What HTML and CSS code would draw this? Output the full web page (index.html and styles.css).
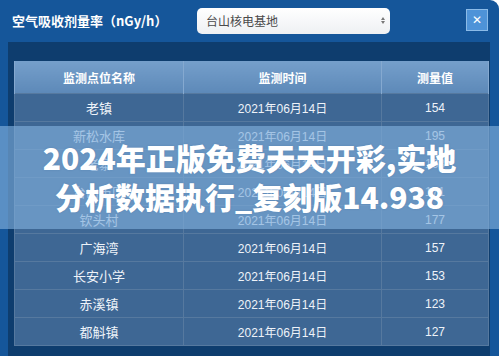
FILE: index.html
```html
<!DOCTYPE html>
<html lang="zh">
<head>
<meta charset="utf-8">
<link rel="stylesheet" href="styles.css">
</head>
<body>
<div class="panel">
  <div class="head">
    <div class="title">空气吸收剂量率（nGy/h）</div>
    <div class="select">
      <span>台山核电基地</span>
      <span class="arrows"><i class="up"></i><i class="down"></i></span>
    </div>
    <div class="close">✕</div>
  </div>
  <div class="body">
    <table class="grid">
      <thead>
        <tr><th class="c1">监测点位名称</th><th class="c2">监测时间</th><th class="c3">测量值</th></tr>
      </thead>
      <tbody>
        <tr><td>老镇</td><td>2021年06月14日</td><td>154</td></tr>
        <tr><td>新松水库</td><td>2021年06月14日</td><td>195</td></tr>
        <tr><td>老寨</td><td>2021年06月14日</td><td>168</td></tr>
        <tr><td>台山市区</td><td>2021年06月14日</td><td>171</td></tr>
        <tr><td>钦头村</td><td>2021年06月14日</td><td>177</td></tr>
        <tr><td>广海湾</td><td>2021年06月14日</td><td>157</td></tr>
        <tr><td>长安小学</td><td>2021年06月14日</td><td>153</td></tr>
        <tr><td>赤溪镇</td><td>2021年06月14日</td><td>123</td></tr>
        <tr><td>都斛镇</td><td>2021年06月14日</td><td>127</td></tr>
      </tbody>
    </table>
  </div>
  <div class="banner">
    <div class="banner-text">2024年正版免费天天开彩,实地<br>分析数据执行_复刻版14.938</div>
  </div>
</div>
</body>
</html>
```

FILE: styles.css
```css
html, body {
  margin: 0;
  padding: 0;
  background: #ffffff;
}
body {
  font-family: "Liberation Sans", "Noto Sans CJK SC", sans-serif;
}
.panel {
  position: relative;
  width: 499px;
  height: 356px;
  background: #15569a;
  border-radius: 0 9px 0 0;
  overflow: hidden;
  display: flex;
  flex-direction: column;
}
.head {
  height: 42px;
  display: flex;
  align-items: center;
  padding: 0 11px 0 12px;
  box-sizing: border-box;
}
.title {
  flex: 1;
  color: #ffffff;
  font-size: 13px;
  font-weight: bold;
  font-family: "Noto Sans CJK SC", sans-serif;
  margin-top: -2px;
}
.select {
  width: 193px;
  height: 26px;
  box-sizing: border-box;
  margin-top: -1px;
  margin-right: 76px;
  background: linear-gradient(#ffffff, #eef0f3);
  border-radius: 5px;
  display: flex;
  align-items: center;
  justify-content: space-between;
  padding: 0 5px 0 9px;
  color: #4a4a4a;
  font-size: 12px;
  font-family: "Noto Sans CJK SC", sans-serif;
}
.arrows {
  display: flex;
  flex-direction: column;
  gap: 1px;
}
.arrows i {
  display: block;
  width: 0;
  height: 0;
  border-left: 2.5px solid transparent;
  border-right: 2.5px solid transparent;
}
.arrows .up { border-bottom: 3px solid #777; }
.arrows .down { border-top: 3px solid #777; }
.close {
  width: 22px;
  height: 22px;
  box-sizing: border-box;
  margin-top: -2px;
  background: #4e93d8;
  border: 1px solid #8bbbe8;
  color: #ffffff;
  font-size: 12px;
  font-weight: bold;
  display: flex;
  align-items: center;
  justify-content: center;
  font-family: "DejaVu Sans", sans-serif;
}
.body {
  flex: 1;
  margin: 0 9px 0 8px;
  background: #0e3d6e;
  padding: 19px 5px 0 6px;
}
.grid {
  width: 471px;
  border-collapse: collapse;
  table-layout: fixed;
  color: #eef3f9;
  font-size: 12px;
}
.grid th {
  height: 32px;
  padding: 0;
  background: linear-gradient(#759fcb, #5d89b8);
  color: #ffffff;
  font-weight: bold;
  font-family: "Noto Sans CJK SC", sans-serif;
  font-size: 12px;
  border-left: 1px solid #85a9d0;
  border-right: 1px solid #85a9d0;
}
.grid .c1 { width: 168px; }
.grid .c2 { width: 197px; }
.grid .c3 { width: 106px; }
.grid td {
  height: 27px;
  padding: 0;
  text-align: center;
  background: #3e6794;
  border: 1px solid #56799f;
}
.grid td:first-child {
  font-family: "Noto Sans CJK SC", sans-serif;
  font-size: 13px;
}
.banner {
  position: absolute;
  left: 0;
  right: 0;
  top: 126px;
  height: 103px;
  background: rgba(126, 173, 219, 0.66);
  display: flex;
  align-items: center;
  justify-content: center;
}
.banner-text {
  color: #ffffff;
  font-family: "Noto Sans CJK SC", sans-serif;
  font-weight: 900;
  font-size: 30px;
  line-height: 39px;
  text-align: center;
  margin-top: -2px;
  text-shadow: 0 0 2px rgba(60, 100, 150, 0.35);
}
```
